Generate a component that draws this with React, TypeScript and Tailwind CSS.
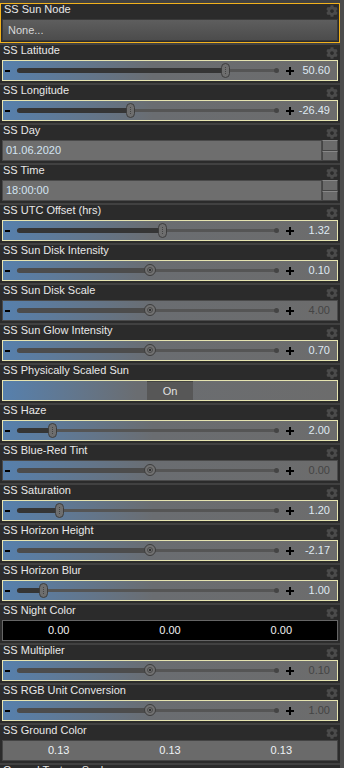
import { FaCog } from "react-icons/fa";

type SliderRow = { kind: "slider"; label: string; value: string; thumb: number; changed: boolean; round: boolean; border: boolean };
type Row =
  | { kind: "node"; label: string }
  | { kind: "field"; label: string; value: string }
  | { kind: "toggle"; label: string }
  | { kind: "color"; label: string; values: string[]; dark: boolean }
  | { kind: "cut"; label: string }
  | SliderRow;

const ROWS: Row[] = [
  { kind: "node", label: "SS Sun Node" },
  { kind: "slider", label: "SS Latitude", value: "50.60", thumb: 225, changed: true, round: false, border: true },
  { kind: "slider", label: "SS Longitude", value: "-26.49", thumb: 130, changed: true, round: false, border: true },
  { kind: "field", label: "SS Day", value: "01.06.2020" },
  { kind: "field", label: "SS Time", value: "18:00:00" },
  { kind: "slider", label: "SS UTC Offset (hrs)", value: "1.32", thumb: 162, changed: true, round: false, border: true },
  { kind: "slider", label: "SS Sun Disk Intensity", value: "0.10", thumb: 150, changed: true, round: true, border: true },
  { kind: "slider", label: "SS Sun Disk Scale", value: "4.00", thumb: 150, changed: false, round: true, border: false },
  { kind: "slider", label: "SS Sun Glow Intensity", value: "0.70", thumb: 150, changed: true, round: true, border: true },
  { kind: "toggle", label: "SS Physically Scaled Sun" },
  { kind: "slider", label: "SS Haze", value: "2.00", thumb: 52, changed: true, round: false, border: true },
  { kind: "slider", label: "SS Blue-Red Tint", value: "0.00", thumb: 150, changed: false, round: true, border: false },
  { kind: "slider", label: "SS Saturation", value: "1.20", thumb: 59, changed: true, round: false, border: true },
  { kind: "slider", label: "SS Horizon Height", value: "-2.17", thumb: 150, changed: true, round: true, border: true },
  { kind: "slider", label: "SS Horizon Blur", value: "1.00", thumb: 43, changed: true, round: false, border: true },
  { kind: "color", label: "SS Night Color", values: ["0.00", "0.00", "0.00"], dark: true },
  { kind: "slider", label: "SS Multiplier", value: "0.10", thumb: 150, changed: false, round: true, border: true },
  { kind: "slider", label: "SS RGB Unit Conversion", value: "1.00", thumb: 150, changed: false, round: true, border: true },
  { kind: "color", label: "SS Ground Color", values: ["0.13", "0.13", "0.13"], dark: false },
  { kind: "cut", label: "Ground Texture Scale" },
];

const font = "font-['Liberation_Sans',Arial,sans-serif]";

function Slider({ row }: { row: SliderRow }) {
  // track starts at page x=17; thumb given in page coords
  const pos = row.thumb - 17;
  return (
    <div className={`h-[21px] mx-[2px] flex items-center border bg-linear-to-r from-[#5680ad] via-[#6a6d71] via-45% to-[#6c6c6c] ${row.border ? "border-[#e6e4b0]" : "border-[#4a4a4a]"}`}>
      <div className="w-[14px] h-full flex items-center"><div className="ml-[2px] w-[5px] h-[2px] bg-black" /></div>
      <div className="relative w-[264px] h-full">
        <div className="absolute left-0 right-[3px] top-[8px] h-[3px] rounded-full bg-[#555]" />
        <div className={`absolute left-0 top-[7px] h-[5px] rounded-full ${row.changed && !row.round ? "bg-[#353535]" : "bg-[#4c4c4c]"}`} style={{ width: pos }} />
        <div className="absolute right-[2px] top-[7px] w-[5px] h-[5px] rounded-full bg-[#444]" />
        {row.round ? (
          <div className="absolute top-[3px] w-[12px] h-[12px] -ml-[6px] rounded-full border border-[#3d3d3d] bg-[#707070] flex items-center justify-center" style={{ left: pos }}>
            <div className="w-[6px] h-[6px] rounded-full border border-[#4a4a4a] flex items-center justify-center"><div className="w-[2px] h-[2px] bg-[#333]" /></div>
          </div>
        ) : (
          <div className="absolute top-[2px] w-[9px] h-[15px] -ml-[4px] rounded-full border border-[#3d3d3d] bg-[#6e6e6e] flex justify-center" style={{ left: pos }}>
            <div className="mt-[3px] h-[7px] border-l border-dotted border-[#444]" />
          </div>
        )}
      </div>
      <div className="w-[18px] flex items-center justify-center">
        <svg width="8" height="8" viewBox="0 0 8 8"><path d="M3 0h2v3h3v2H5v3H3V5H0V3h3z" fill="#000" /></svg>
      </div>
      <div className={`flex-1 text-right pr-[7px] text-[11px] leading-none ${row.changed ? "text-[#dfe9f2]" : "text-[#444]"}`}>{row.value}</div>
    </div>
  );
}

function Control({ row }: { row: Row }) {
  switch (row.kind) {
    case "node":
      return (
        <div className="h-[22px] mx-[1px] flex items-center border border-[#3a3a3a] bg-linear-to-b from-[#5e5e5e] to-[#4c4c4c]">
          <span className="pl-[5px] text-[11px] text-[#d8d8d8]">None...</span>
        </div>
      );
    case "field":
      return (
        <div className="h-[21px] mx-[2px] flex">
          <div className="flex-1 flex items-center border border-[#4a4a4a] bg-[#6e6e6e] pl-[3px] text-[11px] text-[#d3e4f2]">{row.value}</div>
          <div className="w-[16px] flex flex-col">
            <div className="flex-1 border border-[#444] border-t-[#888] bg-[#6a6a6a]" />
            <div className="flex-1 border border-[#444] border-t-[#888] bg-[#6a6a6a]" />
          </div>
        </div>
      );
    case "toggle":
      return (
        <div className="h-[21px] mx-[2px] flex border border-[#e6e4b0] bg-linear-to-r from-[#5680ad] via-[#6a6d71] via-40% to-[#6c6c6c]">
          <div className="w-[144px]" />
          <div className="w-[46px] flex items-center justify-center bg-[#575757] border-t border-[#444] text-[11px] text-[#e2e2e2]">On</div>
        </div>
      );
    case "color":
      return (
        <div className={`h-[21px] mx-[2px] grid grid-cols-3 items-center border text-[11px] ${row.dark ? "bg-black border-[#666] text-[#f0f0f0]" : "bg-[#6a6a6a] border-[#444] text-[#eef2f5]"}`}>
          {row.values.map((v, i) => <div key={i} className="text-center">{v}</div>)}
        </div>
      );
    case "slider":
      return <Slider row={row} />;
    default:
      return null;
  }
}

export default function App() {
  return (
    <div className={`w-[344px] h-[768px] overflow-hidden flex bg-[#2c2c2c] ${font}`}>
      <div className="w-[340px] pt-[3px] flex flex-col gap-[2px] bg-[#414141]">
        {ROWS.map((row, i) => (
          <div key={i} className={`relative shrink-0 bg-[#2b2b2b] ${i === 0 ? "h-[40px] border border-[#f2b21d]" : "h-[38px]"}`}>
            <div className="h-[15px] pl-[3px] text-[11px] leading-[11px] text-[#e8e8e8]">{row.label}</div>
            {row.kind !== "cut" && <FaCog className={`absolute ${i === 0 ? "right-[1px] top-[1px]" : "right-[2px] top-[2px]"} text-[#4b4b4b]`} size={12} />}
            <Control row={row} />
          </div>
        ))}
      </div>
      <div className="w-[4px] bg-[#4c4c4c]" />
    </div>
  );
}
